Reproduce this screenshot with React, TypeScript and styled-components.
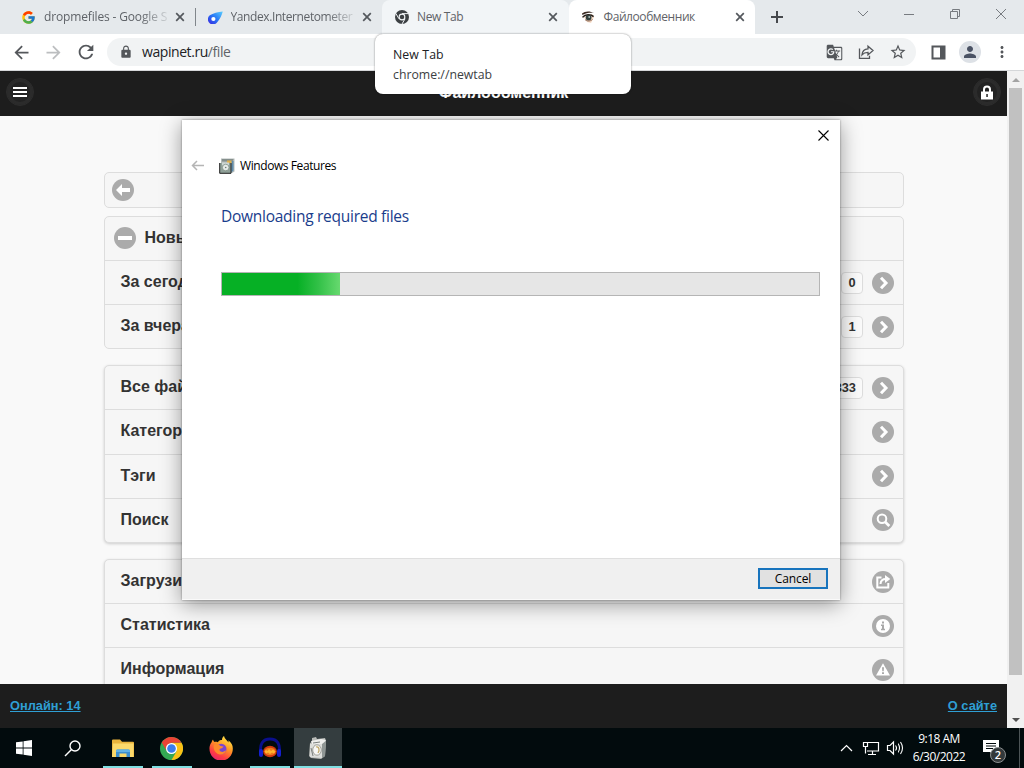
import React from "react";
import styled, {createGlobalStyle, css} from "styled-components";
import {
    MdArrowBack,
    MdArrowForward,
    MdGTranslate,
    MdLock,
    MdMoreVert,
    MdPerson,
    MdRefresh,
    MdStarBorder
} from "react-icons/md";
import {FcGoogle} from "react-icons/fc";

const GlobalStyle = createGlobalStyle`
  * {
    box-sizing: border-box;
  }

  body {
    margin: 0;
    overflow: hidden;
  }

  svg {
    display: block;
    flex-shrink: 0;
  }
`

const uiFont = `"Open Sans", "Noto Sans", sans-serif`;
const pageFont = `"Liberation Sans", Arial, sans-serif`;

const Screen = styled.div`
  position: relative;
  width: 1024px;
  height: 768px;
  overflow: hidden;
  display: flex;
  flex-direction: column;
  font-family: ${uiFont};
`

/* browser window */

const TabStrip = styled.div`
  height: 34px;
  display: flex;
  padding-left: 9px;
  background: #e5e9ec;
`

const TabBox = styled.div<{ $state?: "hover" | "active"; $line?: boolean }>`
  width: 186.5px;
  height: 34px;
  display: flex;
  align-items: center;
  padding-left: 12px;
  border-radius: 8px 8px 0 0;
  color: #5f6368;
  ${p => p.$state === "hover" && css`background: #f2f5f7;`}
  ${p => p.$state === "active" && css`background: #fff;`}
  ${p => p.$line && css`
    border-radius: 0;
    background: linear-gradient(#80868b, #80868b) right 0 top 8px / 1px 18px no-repeat;
  `}
`

const Favicon = styled.span`
  width: 15px;
  height: 16px;
  margin-right: 8px;
  display: flex;
  align-items: center;
  justify-content: center;
`

const TabTitle = styled.span<{ $spacing: number; $fade?: boolean }>`
  width: 124px;
  margin-right: 7px;
  white-space: nowrap;
  font-size: 12px;
  line-height: 18px;
  letter-spacing: ${p => p.$spacing}px;
  ${p => p.$fade && css`mask-image: linear-gradient(90deg, #000 96px, rgba(0, 0, 0, .2) 122px);`}
`

const NewTab = styled.div`
  width: 44px;
  display: flex;
  align-items: center;
  justify-content: center;
`

const WindowButtons = styled.div`
  margin-left: auto;
  height: 28px;
  display: flex;

  span {
    width: 46px;
    display: flex;
    align-items: center;
    justify-content: center;
  }
`

const Toolbar = styled.div`
  height: 37px;
  display: flex;
  align-items: center;
  padding-left: 11px;
  background: #fff;
  border-bottom: 1px solid #d5d7d9;
  color: #54575b;
`

const NavButton = styled.span<{ $faded?: boolean }>`
  width: 32px;
  color: ${p => p.$faded ? "#bcbec0" : "#54575b"};
`

const AddressBar = styled.div`
  width: 809px;
  height: 28px;
  margin-right: 15px;
  display: flex;
  align-items: center;
  padding: 0 9px 0 12px;
  border-radius: 14px;
  background: #f1f3f4;
`

const Url = styled.span`
  flex: 1;
  margin-left: 9px;
  font-size: 14px;
  line-height: 20px;
  letter-spacing: -0.43px;
  color: #5f6368;

  b {
    font-weight: 400;
    color: #202124;
  }
`

const AddressIcons = styled.span`
  display: flex;
  align-items: center;
  gap: 15px;
`

const Avatar = styled.span`
  width: 22px;
  height: 22px;
  margin: 0 12px 0 13px;
  display: flex;
  align-items: center;
  justify-content: center;
  border-radius: 50%;
  background: #dde1e6;
  color: #4a5264;
`

const Tooltip = styled.div`
  position: absolute;
  left: 375px;
  top: 34px;
  width: 256px;
  height: 60px;
  padding: 11px 18px 9px;
  border-radius: 8px;
  background: #fff;
  box-shadow: 0 0 2px rgba(0, 0, 0, .5);
  font-size: 12.3px;
  line-height: 20px;
  color: #3c4043;

  div:first-child {
    color: #202124;
    letter-spacing: 0.1px;
  }
`

/* web page */

const Viewport = styled.div`
  height: 657px;
  display: flex;
`

const Page = styled.div`
  width: 1007px;
  display: flex;
  flex-direction: column;
  background: #f9f9f9;
  font-family: ${pageFont};
  font-weight: 700;
`

const PageHeader = styled.div`
  height: 45px;
  flex-shrink: 0;
  display: flex;
  align-items: center;
  justify-content: space-between;
  padding: 0 6px;
  background: #1d1d1d;
  color: #fff;
  font-size: 16px;

  h1 {
    margin: -2px 0 0;
    font-size: 16px;
    line-height: 20px;
  }
`

const RoundButton = styled.span`
  width: 28px;
  height: 28px;
  margin-top: -3px;
  display: flex;
  align-items: center;
  justify-content: center;
  border: 1px solid #2d2d2d;
  border-radius: 50%;
  background: #222;
  box-shadow: inset 0 0 0 3px #2b2b2b;
`

const PageBody = styled.div`
  flex: 1;
  min-height: 0;
  overflow: hidden;
  display: flex;
  flex-direction: column;
  padding: 56px 103px 0 104px;
`

const BackBar = styled.div`
  height: 36px;
  flex-shrink: 0;
  margin-bottom: 8px;
  padding: 6px 7px;
  border: 1px solid #ddd;
  border-radius: 5px;
  background: #f6f6f6;
`

const List = styled.div<{ $gap: number; $raised?: boolean }>`
  flex-shrink: 0;
  margin-bottom: ${p => p.$gap}px;
  border: 1px solid #ddd;
  border-radius: 5px;
  background: #f6f6f6;
  ${p => p.$raised && css`box-shadow: 0 1px 3px rgba(0, 0, 0, .18);`}
`

const RowLabel = styled.span`
  flex: 1;
  margin-top: -3px;
  line-height: 20px;
`

const Row = styled.div<{ $height: number; $lift?: boolean; $head?: boolean }>`
  height: ${p => p.$height}px;
  display: flex;
  align-items: center;
  padding: 1px 9px 0 15.5px;
  color: #333;
  font-size: 16px;

  & + & {
    border-top: 1px solid #ddd;
  }

  ${p => p.$lift && css`
    padding-top: 0;
    padding-bottom: 1px;

    ${RowLabel} {
      margin-top: -1px;
    }
  `}
  ${p => p.$head && css`
    padding: 0 9px 1px;

    ${RowLabel} {
      margin: -1px 0 0 8.5px;
    }
  `}
`

const Count = styled.span`
  height: 22px;
  min-width: 22px;
  margin: -1px 9px 0 0;
  padding: 0 6px;
  border: 1px solid #ddd;
  border-radius: 4px;
  background: #fbfbfb;
  font-size: 12.8px;
  line-height: 20px;
  text-align: center;
`

const PageFooter = styled.div`
  height: 44px;
  flex-shrink: 0;
  display: flex;
  align-items: center;
  justify-content: space-between;
  padding: 0 10px;
  background: #1d1d1d;

  a {
    color: #2f9fd4;
    font-size: 12.8px;
    line-height: 18px;
    text-decoration: underline;
  }
`

const Scrollbar = styled.div`
  width: 17px;
  display: flex;
  flex-direction: column;
  align-items: center;
  background: #f1f1f1;
`

const ScrollArrow = styled.span`
  height: 17px;
  display: flex;
  align-items: center;
`

const Thumb = styled.span`
  width: 13px;
  height: 587px;
  margin-bottom: auto;
  background: #c1c1c1;
`

/* dialog */

const Dialog = styled.div`
  position: absolute;
  left: 182px;
  top: 120px;
  width: 658px;
  height: 480px;
  display: flex;
  flex-direction: column;
  background: #fff;
  box-shadow: 0 0 2px rgba(0, 0, 0, .4), 0 4px 20px rgba(0, 0, 0, .4);
  color: #000;
`

const DialogTop = styled.div`
  height: 30px;
  display: flex;
  align-items: center;
  justify-content: flex-end;
  padding-right: 11px;
`

const DialogTitle = styled.div`
  height: 31px;
  display: flex;
  align-items: center;
  padding-left: 9px;
  font-size: 12px;
  letter-spacing: -0.42px;

  svg:first-child {
    margin-right: 15px;
  }

  span {
    margin-left: 5px;
  }
`

const DialogBody = styled.div`
  flex: 1;
  padding: 24px 20px 0 39px;

  h2 {
    margin: 0 0 44px;
    color: #1a3d8c;
    font-size: 15.5px;
    font-weight: 400;
    line-height: 23px;
    letter-spacing: -0.27px;
  }
`

const Progress = styled.div`
  height: 24px;
  border: 1px solid #b5b5b5;
  background: #e6e6e6;
`

const ProgressFill = styled.div`
  width: 118px;
  height: 22px;
  background: linear-gradient(90deg, #06b025 0 64%, #33c148 82%, #67d96f);
`

const DialogFooter = styled.div`
  height: 42px;
  display: flex;
  justify-content: flex-end;
  padding: 9px 12px 0 0;
  border-top: 1px solid #dfdfdf;
  border-bottom: 1px solid #fafafa;
  background: #f0f0f0;
`

const CancelButton = styled.button`
  width: 70px;
  height: 21px;
  padding: 0;
  border: 2px solid #1874bd;
  background: #e1e1e1;
  color: #000;
  font-family: ${uiFont};
  font-size: 12px;
  line-height: 16px;
  letter-spacing: -0.1px;
`

/* taskbar */

const Taskbar = styled.div`
  height: 40px;
  display: flex;
  background: #020b0d;
  color: #fff;
`

const TaskButton = styled.span<{ $width?: number; $active?: boolean; $running?: boolean }>`
  width: ${p => p.$width || 49}px;
  height: 40px;
  display: flex;
  align-items: center;
  justify-content: center;
  ${p => p.$running && css`
    background: linear-gradient(#7fdfe2, #7fdfe2) center bottom / 40px 2px no-repeat;
  `}
  ${p => p.$active && css`
    background: linear-gradient(#7fdfe2, #7fdfe2) center bottom / 100% 2px no-repeat, #343d3f;
  `}
`

const Tray = styled.div`
  margin: 0 4px 0 auto;
  display: flex;
  align-items: center;
`

const Clock = styled.div`
  width: 66px;
  margin: -1px 10px 0 0;
  text-align: center;
  white-space: nowrap;
  font-size: 12px;
  line-height: 18px;
  letter-spacing: -0.5px;
`

const Notifications = styled.div`
  position: relative;
  width: 38px;
  height: 40px;
  border-right: 1px solid #4c5456;

  svg {
    margin: 12px 0 0 1px;
  }

  span {
    position: absolute;
    left: 8px;
    top: 19px;
    width: 16px;
    height: 16px;
    border: 1px solid #8b8f90;
    border-radius: 50%;
    background: #33393b;
    font-size: 11px;
    font-weight: 600;
    line-height: 14px;
    text-align: center;
  }
`

const glyphs = {
    back: <path d="M4 11l6-6v4h8v4h-8v4z" fill="#fff"/>,
    minus: <path d="M4 9h14v4H4z" fill="#fff"/>,
    arrow: <path d="M9 5.8l5 5.2-5 5.2" fill="none" stroke="#fff" strokeWidth="3"/>,
    search: <g fill="none" stroke="#fff"><circle cx="10" cy="9.7" r="4.3" strokeWidth="2"/><path d="M13 12.8l4.3 4.2" strokeWidth="2.7"/></g>,
    share: <g fill="none" stroke="#fff" strokeWidth="2"><path d="M9.500 6.500H5.300v10h11V12"/><path d="M8.500 13c.2-3.500 2-5 5.500-5"/><path d="M13 4l5.300 4L13 12z" fill="#fff" stroke="none"/></g>,
    info: <g><circle cx="11" cy="11" r="7" fill="#fff"/><path d="M10 6.500h2v2h-2zM9 9.600h3v4.200h1v1.400H9v-1.400h1V11H9z" fill="#a9a9a9"/></g>,
    alert: <g><path d="M11 4.200l7 12.300H4z" fill="#fff"/><path d="M10 8.200h2l-.3 4h-1.400zM10 13.300h2V15h-2z" fill="#a9a9a9"/></g>
};

type Glyph = keyof typeof glyphs;

function RoundIcon({name}: { name: Glyph }) {
    return (
        <svg width="22" height="22" viewBox="0 0 22 22">
            <circle cx="11" cy="11" r="11" fill="#ababab"/>
            {glyphs[name]}
        </svg>
    );
}

function ChromeLogo({size, mono}: { size: number; mono?: boolean }) {
    return (
        <svg width={size} height={size} viewBox="0 0 24 24">
            <circle cx="12" cy="12" r="12" fill={mono ? "#3c4043" : "#34a853"}/>
            {!mono && <path d="M12 6h10.400A12 12 0 0 1 12 24l5.200-9z" fill="#fbc116"/>}
            {!mono && <path d="M1.800 5.800L7 14.600 8.500 8 12 6H22.400A12 12 0 0 0 1.800 5.800z" fill="#ea4335"/>}
            {mono && <path d="M12 6.200h11M6.800 15L1.400 5.800M17.200 15L12 24" stroke="#f2f5f7" strokeWidth="1.700"/>}
            <circle cx="12" cy="12" r="5.800" fill={mono ? "#f2f5f7" : "#fff"}/>
            <circle cx="12" cy="12" r={mono ? 3.9 : 4.5} fill={mono ? "#3c4043" : "#3b7ded"}/>
        </svg>
    );
}

function MeterIcon() {
    return (
        <svg width="15" height="13" viewBox="0 0 15 13">
            <defs>
                <linearGradient id="meter" x1="0" y1="1" x2="1" y2="0">
                    <stop offset="0" stopColor="#3a24e0"/>
                    <stop offset=".5" stopColor="#2878f5"/>
                    <stop offset="1" stopColor="#5bd0ff"/>
                </linearGradient>
            </defs>
            <path d="M1.800 4.200C5 2.400 10 1 14.800.5 13.800 4 12 8 9.600 10.800a5.200 5.200 0 1 1-7.800-6.600z" fill="url(#meter)"/>
            <circle cx="5.400" cy="8" r="2.100" fill="#fff"/>
        </svg>
    );
}

function EyeIcon() {
    return (
        <svg width="14" height="14" viewBox="0 0 14 14">
            <path d="M3 7l8-3 2 3-3 6-4-1z" fill="#f6dcc8"/>
            <path d="M1 3.600C4 .8 9 .8 13 3 9 2.600 5 3 1.400 5z" fill="#3a2a22"/>
            <path d="M1.500 7.400C4 4.200 10 4 12.600 6.600" fill="none" stroke="#2a211c" strokeWidth="1.500"/>
            <circle cx="7.600" cy="7.600" r="2.900" fill="#33413f"/>
            <circle cx="8.200" cy="7" r=".9" fill="#aec0bd"/>
            <path d="M4 9.500c2 2 5 2 7.500 0" fill="none" stroke="#8a6450"/>
        </svg>
    );
}

function CloseIcon() {
    return (
        <svg width="10" height="10" stroke="#54585d" strokeWidth="1.700"><path d="M1.200 1.200l7.600 7.600M8.800 1.200L1.200 8.800"/></svg>
    );
}

function FeaturesIcon({size}: { size: number }) {
    return (
        <svg width={size} height={size} viewBox="0 0 16 16">
            <path d="M2 .5h13.500v13L13 15H2z" fill="#b4bbb9"/>
            <path d="M3 1h11.500l-1 2.500H3z" fill="#858f8c"/>
            <path d="M12.300 3h2.200v9.500l-2.200 2z" fill="#5f8cab"/>
            <path d="M8 2.500h4.500V6H8z" fill="#dfb04c"/>
            <path d="M.7 5v10.300H12V5" fill="#8fa098" stroke="#222" strokeWidth="1"/>
            <path d="M3 4.500h7v3H3z" fill="#ced7d3"/>
            <circle cx="6.700" cy="9.500" r="3.300" fill="#e6ebe8" stroke="#75867d" strokeWidth=".7"/>
            <circle cx="6.700" cy="9.500" r=".8" fill="#6c7b74"/>
        </svg>
    );
}

function PackageIcon() {
    return (
        <svg width="20" height="24" viewBox="0 0 20 24">
            <path d="M4 2l4-1 1 2 8-1 1 3-1 15-4 3-10-1-2-2 1-13 2-1z" fill="#b8bab7"/>
            <path d="M3 5l10-2 5 1-3 4H4z" fill="#efefed"/>
            <path d="M14 8l4-3-1 15-4 3z" fill="#8f9694"/>
            <path d="M2 8h12v14l-12-1z" fill="#dddedb"/>
            <ellipse cx="9" cy="14" rx="4.300" ry="5.200" fill="#f7f7f5" stroke="#9c9d96"/>
            <path d="M8 11c3-1 4 3 2 6" fill="none" stroke="#bfa768" strokeWidth="1.300"/>
            <path d="M3 12l2 8M5 7l7-1" stroke="#797f7d"/>
        </svg>
    );
}

function ExplorerIcon() {
    return (
        <svg width="22" height="19" viewBox="0 0 22 19">
            <path d="M0 1.500Q0 .5 1 .5h7l2 2.300h11q1 0 1 1V18H0z" fill="#e9b43d"/>
            <path d="M1 4.500h20.500V18H0z" fill="#fbd96b"/>
            <path d="M4 18v-6q0-1.500 1.500-1.500h11Q18 10.500 18 12v6h-3.500v-3.500h-7V18z" fill="#3d8fd0"/>
            <path d="M4 11.500q0-1 1.500-1h11q1.500 0 1.500 1V13H4z" fill="#63b3e6"/>
        </svg>
    );
}

function FirefoxIcon() {
    return (
        <svg width="24" height="24" viewBox="0 0 24 24">
            <defs>
                <linearGradient id="fox" x1=".8" y1="0" x2=".25" y2="1">
                    <stop offset="0" stopColor="#fff04c"/>
                    <stop offset=".4" stopColor="#ff9a25"/>
                    <stop offset=".75" stopColor="#ff3d43"/>
                    <stop offset="1" stopColor="#e5226f"/>
                </linearGradient>
            </defs>
            <path d="M2.600 6.200c.2-1 .7-2 1.400-2.700.2 1 .8 1.900 1.500 2.400 1.200-.2 2.300 0 3.300.3C10 4 12 4 13 4c0-1.700.7-3 2-4 .5 3 3.300 4.500 4.500 6.400.1-.8 0-1.500-.3-2.200C22.500 6.500 24 9.500 23.800 13A11.600 11.600 0 0 1 .5 13c-.2-2.500.7-5 2.100-6.800z" fill="url(#fox)"/>
            <circle cx="12.300" cy="13" r="5.200" fill="#7a45d0"/>
            <path d="M5 8.500c2.500-1.200 5-.5 6.500 1.600l3 .3c-.2 1.400-2.200 1.600-3.500 2.400-1 .7-.5 2.400 1.400 3 1.700.4 3.500-.5 4.700-1.500-.6 3.200-4 5-7.200 4-4-1.300-6-5.500-4.900-9.800z" fill="#ff8a2b"/>
        </svg>
    );
}

function AudacityIcon() {
    return (
        <svg width="24" height="22" viewBox="0 0 24 22">
            <path d="M3 17C1 7 5 2 12 2s11 5 9 15" fill="none" stroke="#0a0f8c" strokeWidth="3"/>
            <rect x="1" y="12" width="4" height="8" rx="2" fill="#1520d0"/>
            <rect x="19" y="12" width="4" height="8" rx="2" fill="#1520d0"/>
            <ellipse cx="12" cy="14.500" rx="6.800" ry="5.800" fill="#d23a10"/>
            <ellipse cx="12" cy="14.500" rx="5.500" ry="3.800" fill="#f07a1c"/>
            <path d="M6.500 14.500l1.500-1.500 1.500 1 1.500-2 2 2 2-1.500 2.500 2-1.500 2-2-1-2 1.500-2-1.500-2 1z" fill="#ffb52e"/>
        </svg>
    );
}

function Tab({icon, title, spacing, state, line, fade}: {
    icon: React.ReactNode; title: string; spacing: number; state?: "hover" | "active"; line?: boolean; fade?: boolean;
}) {
    return (
        <TabBox $state={state} $line={line}>
            <Favicon>{icon}</Favicon>
            <TabTitle $spacing={spacing} $fade={fade}>{title}</TabTitle>
            <CloseIcon/>
        </TabBox>
    );
}

function Browser() {
    return (
        <>
            <TabStrip>
                <Tab icon={<FcGoogle size={15}/>} title="dropmefiles - Google S" spacing={-0.15} line fade/>
                <Tab icon={<MeterIcon/>} title="Yandex.Internetometer" spacing={-0.4} fade/>
                <Tab icon={<ChromeLogo size={14} mono/>} title="New Tab" spacing={-0.35} state="hover"/>
                <Tab icon={<EyeIcon/>} title="Файлообменник" spacing={-0.42} state="active"/>
                <NewTab>
                    <svg width="12" height="12" stroke="#46494d" strokeWidth="2"><path d="M6 0v12M0 6h12"/></svg>
                </NewTab>
                <WindowButtons>
                    <span><svg width="12" height="12" fill="none" stroke="#777b80"><path d="M1 3l5 5 5-5"/></svg></span>
                    <span><svg width="12" height="12" stroke="#777b80"><path d="M1 6.500h10"/></svg></span>
                    <span><svg width="12" height="12" fill="none" stroke="#777b80"><path d="M1.500 3.500h7v7h-7zM3.500 3.500v-2h7v7h-2"/></svg></span>
                    <span><svg width="12" height="12" stroke="#777b80"><path d="M1 1l10 10M11 1L1 11"/></svg></span>
                </WindowButtons>
            </TabStrip>
            <Toolbar>
                <NavButton><MdArrowBack size={21}/></NavButton>
                <NavButton $faded><MdArrowForward size={21}/></NavButton>
                <NavButton><MdRefresh size={22}/></NavButton>
                <AddressBar>
                    <MdLock size={14}/>
                    <Url><b>wapinet.ru</b>/file</Url>
                    <AddressIcons>
                        <MdGTranslate size={17}/>
                        <svg width="16" height="16" viewBox="0 0 16 16" fill="none" stroke="#54575b" strokeWidth="1.300">
                            <path d="M1.500 4.500v9.800h10v-2.500"/>
                            <path d="M4 10.800c.3-4 2.500-5.800 6-6V2.200l5 4.400-5 4.300V8.400c-2.500 0-4.500.6-6 2.400z"/>
                        </svg>
                        <MdStarBorder size={18}/>
                    </AddressIcons>
                </AddressBar>
                <svg width="15" height="15" viewBox="0 0 15 15">
                    <path d="M1.500 1.500h12v12h-12z" fill="none" stroke="#54575b" strokeWidth="2"/>
                    <path d="M9 1h5v13H9z" fill="#54575b"/>
                </svg>
                <Avatar><MdPerson size={18}/></Avatar>
                <MdMoreVert size={18}/>
            </Toolbar>
        </>
    );
}

function ListRow({label, icon, count, lift, height = 44}: {
    label: string; icon: Glyph; count?: string; lift?: boolean; height?: number;
}) {
    return (
        <Row $height={height} $lift={lift}>
            <RowLabel>{label}</RowLabel>
            {count && <Count>{count}</Count>}
            <RoundIcon name={icon}/>
        </Row>
    );
}

function FilesPage() {
    return (
        <Viewport>
            <Page>
                <PageHeader>
                    <RoundButton>
                        <svg width="14" height="12"><path d="M0 2h14M0 6h14M0 10h14" stroke="#fff" strokeWidth="2"/></svg>
                    </RoundButton>
                    <h1>Файлообменник</h1>
                    <RoundButton>
                        <svg width="14" height="15" viewBox="0 0 14 15">
                            <path d="M4 7V4.500a3 3 0 0 1 6 0V7" fill="none" stroke="#fff" strokeWidth="2"/>
                            <path d="M1 6.500h12V14.500H1z" fill="#fff"/>
                            <path d="M6.300 9h1.500v3H6.300z" fill="#222"/>
                        </svg>
                    </RoundButton>
                </PageHeader>
                <PageBody>
                    <BackBar><RoundIcon name="back"/></BackBar>
                    <List $gap={16}>
                        <Row $height={43} $head>
                            <RoundIcon name="minus"/>
                            <RowLabel>Новые файлы</RowLabel>
                        </Row>
                        <ListRow label="За сегодня" icon="arrow" count="0"/>
                        <ListRow label="За вчера" icon="arrow" count="1"/>
                    </List>
                    <List $gap={16} $raised>
                        <ListRow label="Все файлы" icon="arrow" count="333" height={43}/>
                        <ListRow label="Категории" icon="arrow" height={45} lift/>
                        <ListRow label="Тэги" icon="arrow" lift/>
                        <ListRow label="Поиск" icon="search" lift/>
                    </List>
                    <List $gap={0} $raised>
                        <ListRow label="Загрузить" icon="share" height={43}/>
                        <ListRow label="Статистика" icon="info"/>
                        <ListRow label="Информация" icon="alert"/>
                    </List>
                </PageBody>
                <PageFooter>
                    <a>Онлайн: 14</a>
                    <a>О сайте</a>
                </PageFooter>
            </Page>
            <Scrollbar>
                <ScrollArrow><svg width="8" height="4"><path d="M4 0l4 4H0z" fill="#a3a3a3"/></svg></ScrollArrow>
                <Thumb/>
                <ScrollArrow><svg width="8" height="4"><path d="M0 0h8L4 4z" fill="#505050"/></svg></ScrollArrow>
            </Scrollbar>
        </Viewport>
    );
}

function FeaturesDialog() {
    return (
        <Dialog>
            <DialogTop>
                <svg width="11" height="11" stroke="#000" strokeWidth="1.100"><path d="M.5.5l10 10M10.500.5l-10 10"/></svg>
            </DialogTop>
            <DialogTitle>
                <svg width="13" height="11" fill="none" stroke="#b5b5b5" strokeWidth="1.500"><path d="M13 5.500H1.500M6 1L1.500 5.500 6 10"/></svg>
                <FeaturesIcon size={16}/>
                <span>Windows Features</span>
            </DialogTitle>
            <DialogBody>
                <h2>Downloading required files</h2>
                <Progress><ProgressFill/></Progress>
            </DialogBody>
            <DialogFooter>
                <CancelButton>Cancel</CancelButton>
            </DialogFooter>
        </Dialog>
    );
}

function WindowsTaskbar() {
    return (
        <Taskbar>
            <TaskButton $width={48}>
                <svg width="16" height="16" viewBox="0 0 16 16" fill="#fff">
                    <path d="M0 2.300L6.700 1.400v6.200H0zM7.500 1.300L16 0v7.600H7.500zM0 8.400h6.700v6.200L0 13.700zM7.500 8.400H16V16l-8.500-1.300z"/>
                </svg>
            </TaskButton>
            <TaskButton $width={50}>
                <svg width="18" height="17" viewBox="0 0 18 17" fill="none" stroke="#fff" strokeWidth="1.400">
                    <circle cx="11" cy="6" r="5"/>
                    <path d="M7.500 9.500L1 16"/>
                </svg>
            </TaskButton>
            <TaskButton $running><ExplorerIcon/></TaskButton>
            <TaskButton $running><ChromeLogo size={23}/></TaskButton>
            <TaskButton><FirefoxIcon/></TaskButton>
            <TaskButton $running><AudacityIcon/></TaskButton>
            <TaskButton $active $width={48}><PackageIcon/></TaskButton>
            <Tray>
                <svg width="58" height="18" viewBox="0 0 58 18" fill="none" stroke="#fff" strokeWidth="1.200">
                    <path d="M1 12l5.500-5.500L12 12"/>
                    <path d="M27 3.500h11.500v8.500H27M32.500 12v3.500M28 15.500h8M23.500 3.500h4v4h-4zM25.500 7.500v7"/>
                    <path d="M47.500 6.500h2.500l3.500-3.500v12L50 11.500h-2.500z"/>
                    <path d="M55.500 6.500q2 2.500 0 5"/>
                </svg>
                <svg width="8" height="18" viewBox="0 0 8 18" fill="none" stroke="#fff" strokeWidth="1.100">
                    <path d="M0 4.500q3 4.500 0 9M2.500 3q4 6 0 12"/>
                </svg>
                <Clock>
                    <div>9:18 AM</div>
                    <div>6/30/2022</div>
                </Clock>
                <Notifications>
                    <svg width="16" height="16" viewBox="0 0 16 16">
                        <path d="M0 0h16v12h-5v3.500L7 12H0z" fill="#fff"/>
                        <path d="M3 3.500h10M3 6h10M3 8.500h7" stroke="#020b0d"/>
                    </svg>
                    <span>2</span>
                </Notifications>
            </Tray>
        </Taskbar>
    );
}

function App() {
    return (
        <Screen>
            <GlobalStyle/>
            <Browser/>
            <FilesPage/>
            <WindowsTaskbar/>
            <FeaturesDialog/>
            <Tooltip>
                <div>New Tab</div>
                <div>chrome://newtab</div>
            </Tooltip>
        </Screen>
    );
}

export default App;
